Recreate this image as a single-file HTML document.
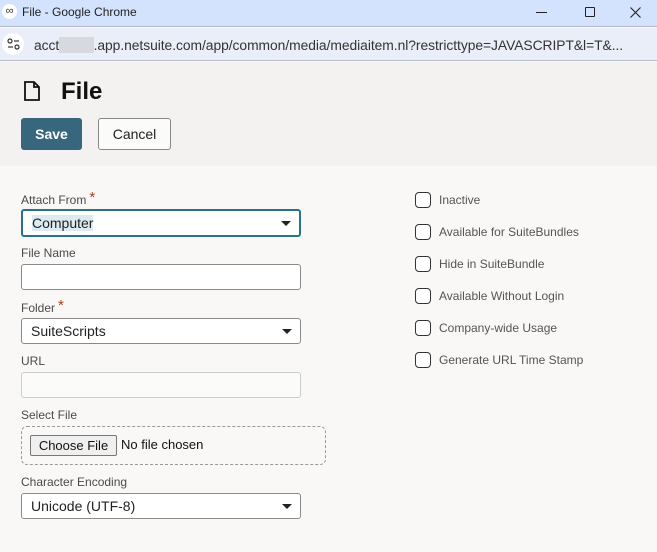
<!DOCTYPE html>
<html><head><style>
*{box-sizing:border-box;margin:0;padding:0}
body{width:657px;height:552px;overflow:hidden;background:#f9f8f6;font-family:"Liberation Sans",sans-serif;position:relative}
.a{position:absolute}
.lbl{position:absolute;left:21px;font-size:12px;color:#4a4a4a}
.star{color:#b33a1f;font-size:15px;position:relative;top:-2px;margin-left:3px}
.box{position:absolute;left:21px;width:280px;height:26px;border:1px solid #8a8a8a;border-radius:3px;background:#fff;font-size:14px;color:#222;padding:4px 9px}
.tri{position:absolute;right:8px;top:10px;width:0;height:0;border-left:5px solid transparent;border-right:5px solid transparent;border-top:5px solid #222}
.cb{position:absolute;left:415px;width:16px;height:16px;border:1.3px solid #333;border-radius:4px;background:#fff}
.cl{position:absolute;left:439px;font-size:12px;color:#555}
</style></head><body>
<div class="a" style="left:0;top:0;width:657px;height:27px;background:#d3e3fd;border-bottom:1px solid #b5bcc8"></div>
<div class="a" style="left:2px;top:4px;width:15px;height:15px;border-radius:50%;background:#fff;font-size:11px;line-height:15px;text-align:center;color:#333">∞</div>
<div class="a" style="left:22px;top:5px;font-size:12px;color:#222">File - Google Chrome</div>
<div class="a" style="left:536px;top:12px;width:11px;height:1px;background:#222"></div>
<div class="a" style="left:585px;top:7px;width:10px;height:10px;border:1px solid #222;border-radius:1px"></div>
<svg class="a" style="left:630px;top:7px" width="11" height="11"><path d="M0.5 0.5L10.5 10.5M10.5 0.5L0.5 10.5" stroke="#222" stroke-width="1.1"/></svg>
<div class="a" style="left:0;top:28px;width:657px;height:33px;background:#e9eef8;border-bottom:1px solid #b5bcc8"></div>
<div class="a" style="left:2px;top:33px;width:22px;height:22px;border-radius:50%;background:#fff"></div>
<svg class="a" style="left:7px;top:38px" width="13" height="12"><circle cx="3" cy="3" r="2" fill="none" stroke="#333" stroke-width="1.2"/><line x1="7" y1="3" x2="12" y2="3" stroke="#333" stroke-width="1.2"/><line x1="1" y1="9" x2="6" y2="9" stroke="#333" stroke-width="1.2"/><circle cx="10" cy="9" r="2" fill="none" stroke="#333" stroke-width="1.2"/></svg>
<div class="a" style="left:34px;top:37px;font-size:13.85px;letter-spacing:-0.05px;color:#333;white-space:nowrap">acct<span style="background:#d6d9de;color:transparent">xxxxx</span>.app.netsuite.com/app/common/media/mediaitem.nl?restricttype=JAVASCRIPT&amp;l=T&amp;...</div>
<div class="a" style="left:0;top:62px;width:657px;height:104px;background:#f3f2f1"></div>
<svg class="a" style="left:24px;top:81px" width="16" height="20"><path d="M1 1H10L15 6V19H1Z M10 1V6H15" fill="none" stroke="#111" stroke-width="1.8"/></svg>
<div class="a" style="left:61px;top:78px;font-size:24px;font-weight:bold;color:#111">File</div>
<div class="a" style="left:21px;top:118px;width:61px;height:32px;background:#36677d;border-radius:3px;color:#fff;font-weight:bold;font-size:14px;text-align:center;line-height:32px">Save</div>
<div class="a" style="left:98px;top:118px;width:73px;height:32px;border:1px solid #888;border-radius:3px;background:#fbfbfa;color:#222;font-size:14px;text-align:center;line-height:30px">Cancel</div>

<div class="lbl" style="top:191px">Attach From<span class="star">*</span></div>
<div class="box" style="top:209px;height:28px;border:2px solid #2a7191"><span style="background:#dcebef">Computer</span><div class="tri"></div></div>
<div class="lbl" style="top:246px">File Name</div>
<div class="box" style="top:264px"></div>
<div class="lbl" style="top:299px">Folder<span class="star">*</span></div>
<div class="box" style="top:318px">SuiteScripts<div class="tri"></div></div>
<div class="lbl" style="top:354px">URL</div>
<div class="box" style="top:372px;border-color:#ccc;background:#fbfbfa"></div>
<div class="lbl" style="top:408px">Select File</div>
<div class="a" style="left:21px;top:426px;width:305px;height:39px;border:1px dashed #999;border-radius:6px"></div>
<div class="a" style="left:30px;top:435px;width:87px;height:21px;border:1px solid #777;border-radius:2px;background:#efefef;font-size:13px;text-align:center;line-height:19px;color:#111">Choose File</div>
<div class="a" style="left:121px;top:437px;font-size:13px;color:#111">No file chosen</div>
<div class="lbl" style="top:475px">Character Encoding</div>
<div class="box" style="top:493px">Unicode (UTF-8)<div class="tri"></div></div>

<div class="cb" style="top:192px"></div><div class="cl" style="top:193px">Inactive</div>
<div class="cb" style="top:224px"></div><div class="cl" style="top:225px">Available for SuiteBundles</div>
<div class="cb" style="top:256px"></div><div class="cl" style="top:257px">Hide in SuiteBundle</div>
<div class="cb" style="top:288px"></div><div class="cl" style="top:289px">Available Without Login</div>
<div class="cb" style="top:320px"></div><div class="cl" style="top:321px">Company-wide Usage</div>
<div class="cb" style="top:352px"></div><div class="cl" style="top:353px">Generate URL Time Stamp</div>
</body></html>
